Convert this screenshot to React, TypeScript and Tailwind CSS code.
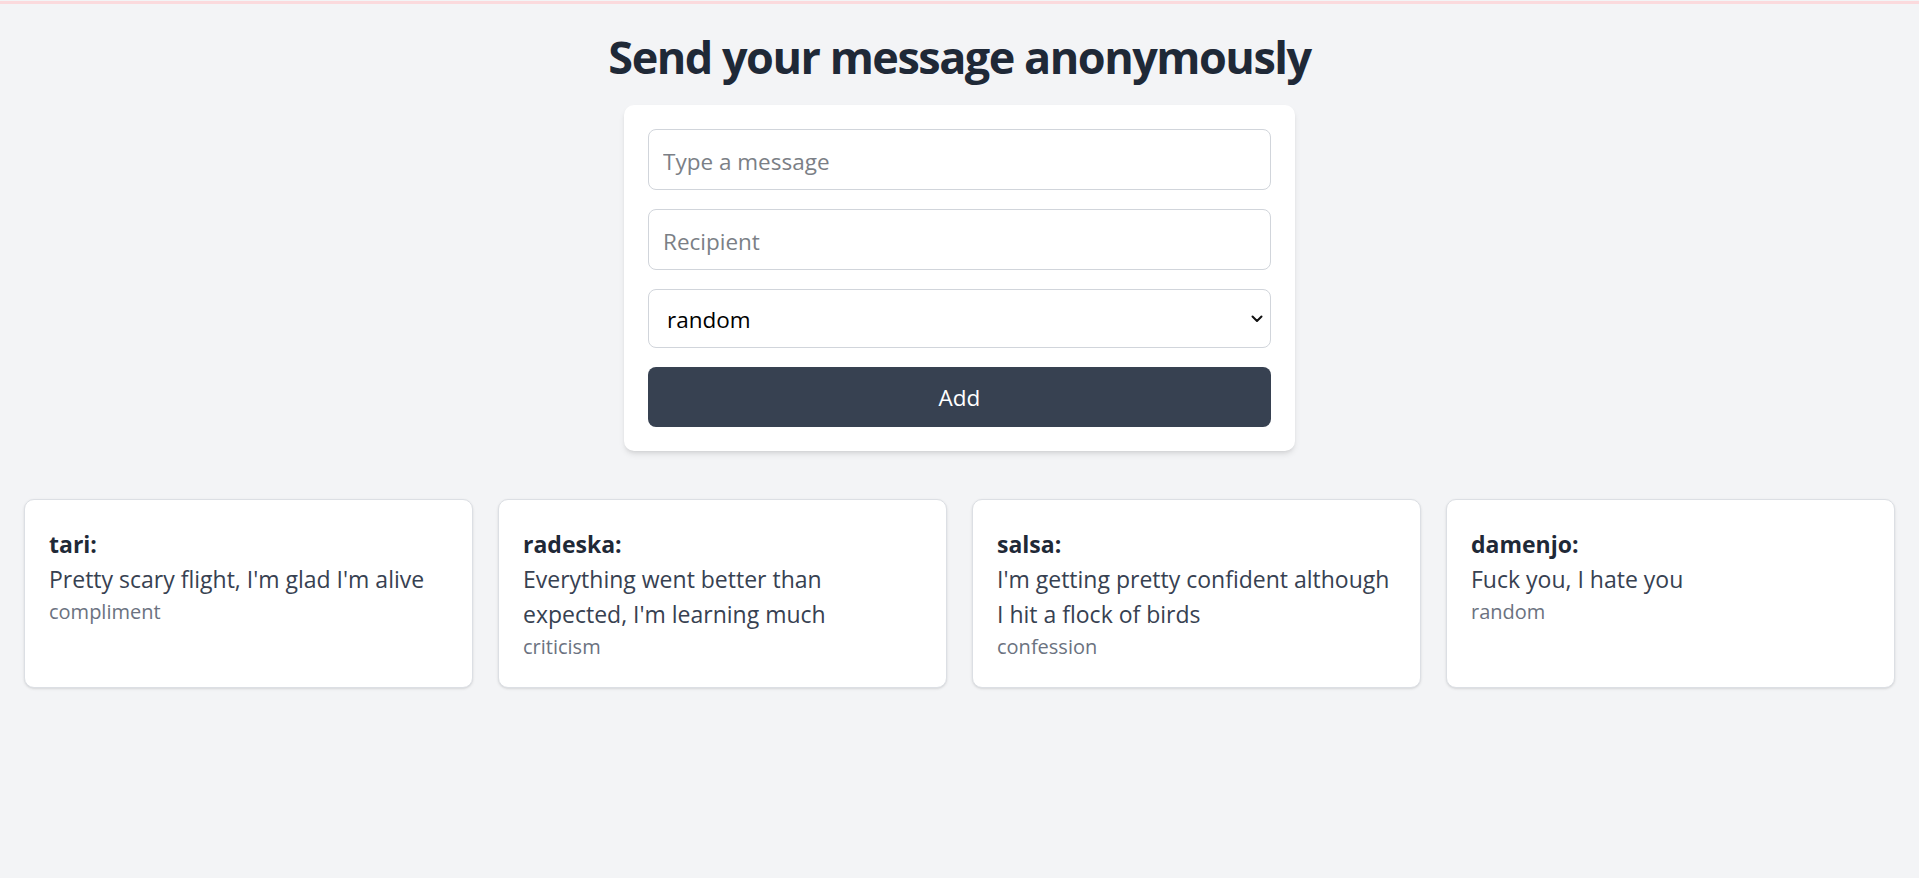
import { useState } from "react";

type Msg = { name: string; text: string; kind: string };

const messages: Msg[] = [
  { name: "tari", text: "Pretty scary flight, I'm glad I'm alive", kind: "compliment" },
  { name: "radeska", text: "Everything went better than expected, I'm learning much", kind: "criticism" },
  { name: "salsa", text: "I'm getting pretty confident although I hit a flock of birds", kind: "confession" },
  { name: "damenjo", text: "Fuck you, I hate you", kind: "random" },
];

function Chevron() {
  return (
    <svg width="12" height="8" viewBox="0 0 12 8" className="pointer-events-none absolute right-[8px] top-1/2 -translate-y-1/2">
      <path d="M1.5 1.5 L6 6 L10.5 1.5" fill="none" stroke="#111" strokeWidth="2" strokeLinecap="round" strokeLinejoin="round" />
    </svg>
  );
}

export default function App() {
  const [text, setText] = useState("");
  const [to, setTo] = useState("");
  const [kind, setKind] = useState("random");

  return (
    <main className="min-h-screen bg-[#f3f4f6] font-['Open_Sans',sans-serif]">
      <div className="pt-px">
        <div className="h-[3px] bg-[#fbdadd]" />
      </div>
      <h1 className="mt-[28px] text-center text-[45px] leading-[50px] font-bold tracking-[-1.5px] text-[#1f2937]">
        Send your message anonymously
      </h1>
      <form
        className="mx-auto mt-[23px] flex w-[671px] flex-col gap-[19px] rounded-[10px] bg-white p-[24px] shadow-md"
        onSubmit={(e) => e.preventDefault()}
      >
        <input
          value={text}
          onChange={(e) => setText(e.target.value)}
          placeholder="Type a message"
          className="h-[61px] rounded-[8px] border border-[#d1d5db] px-[14px] pt-[3px] text-[22.5px] text-[#111827] placeholder:text-[#7b7f86] outline-none"
        />
        <input
          value={to}
          onChange={(e) => setTo(e.target.value)}
          placeholder="Recipient"
          className="h-[61px] rounded-[8px] border border-[#d1d5db] px-[14px] pt-[3px] text-[22.5px] text-[#111827] placeholder:text-[#7b7f86] outline-none"
        />
        <div className="relative">
          <select
            value={kind}
            onChange={(e) => setKind(e.target.value)}
            className="h-[59px] w-full appearance-none rounded-[8px] border border-[#d1d5db] bg-white px-[18px] pt-[2px] text-[22.5px] text-black outline-none"
          >
            <option value="random">random</option>
            <option value="compliment">compliment</option>
            <option value="criticism">criticism</option>
            <option value="confession">confession</option>
          </select>
          <Chevron />
        </div>
        <button className="h-[60px] rounded-[8px] bg-[#374151] pt-[2px] text-[22.5px] text-white">Add</button>
      </form>

      <section className="mt-[23px] grid grid-cols-4 gap-[25px] px-[24px] py-[25px]">
        {messages.map((m) => (
          <div key={m.name} className="rounded-[10px] border border-[#dcdfe4] bg-white px-[24px] pt-[27px] pb-[25px] shadow-sm">
            <p className="text-[23px] leading-[35px] font-bold text-[#1f2937]">{m.name}:</p>
            <p className="text-[23px] leading-[35px] text-[#374151]">{m.text}</p>
            <p className="text-[20px] leading-[30px] text-[#6b7280]">{m.kind}</p>
          </div>
        ))}
      </section>
    </main>
  );
}
